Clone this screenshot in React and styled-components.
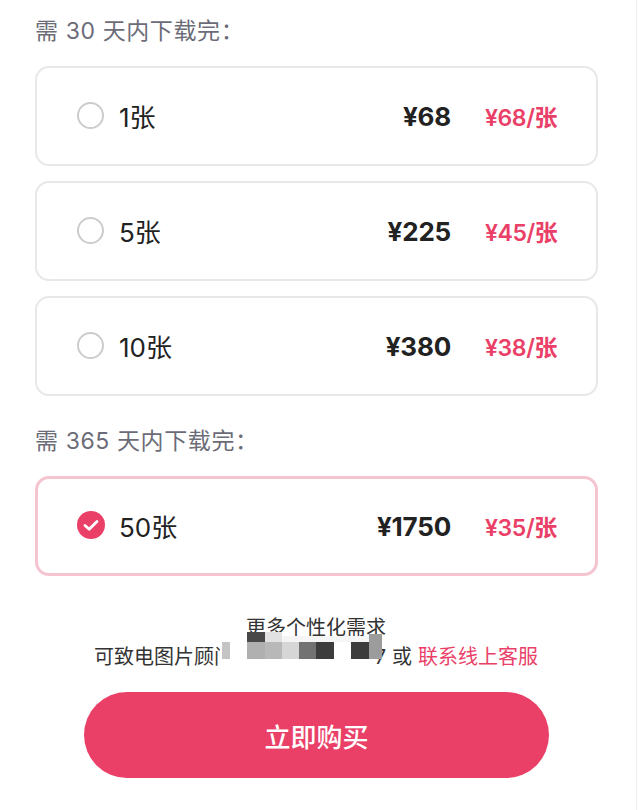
import styled, { createGlobalStyle } from 'styled-components';

const GlobalStyle = createGlobalStyle`
  body {
    margin: 0;
    background: #fff;
    font-family: "Inter", "Noto Sans CJK SC", sans-serif;
  }
`

const Page = styled.div`
  width: 640px;
  height: 810px;
  overflow: hidden;
`

const Panel = styled.div`
  width: 637px;
  height: 810px;
  box-sizing: border-box;
  padding: 15px 38px 0 35px;
  border-right: 1px solid #f3ecee;
`

const GroupTitle = styled.div`
  height: 32px;
  line-height: 32px;
  font-size: 23px;
  letter-spacing: 0.6px;
  color: #6c6c78;
  margin-bottom: ${props => props.$gap}px;
`

const PlanList = styled.div`
  display: flex;
  flex-direction: column;
  gap: 15px;
  margin-bottom: ${props => props.$gap}px;
`

const Plan = styled.div`
  height: 100px;
  box-sizing: border-box;
  display: flex;
  align-items: center;
  background: #fff;
  border: ${props => props.$active ? '3px solid #f4c4d0' : '2px solid #e8e8e8'};
  border-radius: 14px;
  padding: 0 ${props => props.$active ? '39px' : '40px'};
`

const Radio = styled.span`
  width: 27px;
  height: 27px;
  flex: none;
  box-sizing: border-box;
  border: 2px solid #cccccc;
  border-radius: 50%;
  margin-top: -2px;
`

const Checked = styled.svg`
  width: 28px;
  height: 28px;
  flex: none;
  margin: -2px -1px 0 0;
`

const Count = styled.span`
  margin: -2px 0 0 15px;
  font-size: 26px;
  color: #222;
`

const Price = styled.span`
  margin-left: auto;
  font-size: 26px;
  font-weight: 700;
  letter-spacing: -0.2px;
  color: #222;
`

const UnitPrice = styled.span`
  width: 71px;
  margin-left: 34px;
  font-size: 23px;
  font-weight: 600;
  letter-spacing: -0.4px;
  white-space: nowrap;
  color: #ea4068;
`

const Contact = styled.div`
  position: relative;
  width: 563px;
  text-align: center;
  font-size: 20px;
  color: #333;
`

const ContactTitle = styled.div`
  height: 27px;
  line-height: 27px;
  padding-right: 1px;
`

const ContactLine = styled.div`
  height: 30px;
  line-height: 30px;
  margin-left: 59px;
  display: flex;
  white-space: nowrap;
`

const Phone = styled.span`
  width: 158px;
  text-align: right;
  padding-right: 6px;
  box-sizing: border-box;
`

const ContactLink = styled.span`
  color: #ea4068;
  margin-left: 6px;
`

const Mosaic = styled.svg`
  position: absolute;
  left: 183px;
  top: 14px;
  width: 169px;
  height: 40px;
`

const BuyButton = styled.button`
  display: block;
  width: 465px;
  height: 86px;
  margin: 20px 0 0 49px;
  border: 0;
  border-radius: 43px;
  background: #ea4068;
  color: #fff;
  font-family: inherit;
  font-size: 26px;
  font-weight: 500;
`

const blocks = [
  [2, 13, 27, 25, '#ffffff'],
  [29, 3, 18, 10, '#484848'],
  [47, 3, 17, 10, '#e2e2e2'],
  [64, 7, 87, 6, '#f5f5f5'],
  [29, 13, 18, 17, '#b0b0b0'],
  [47, 13, 17, 17, '#b8b8b8'],
  [64, 13, 17, 17, '#d6d6d6'],
  [81, 13, 17, 17, '#727272'],
  [98, 13, 18, 17, '#3c3c3c'],
  [133, 13, 18, 17, '#3c3c3c'],
  [151, 5, 13, 25, '#9c9c9c'],
  [4, 13, 8, 17, '#c4c4c4'],
]

const PlanRow = ({ count, price, unit, active }) => (
  <Plan $active={active}>
    {active ? (
      <Checked viewBox="0 0 28 28">
        <circle cx="14" cy="14" r="14" fill="#ea4068" />
        <path d="M8 14.5l4.2 3.8L20 10.5" fill="none" stroke="#fff" strokeWidth="2.8" strokeLinecap="round" strokeLinejoin="round" />
      </Checked>
    ) : <Radio />}
    <Count>{count}张</Count>
    <Price>¥{price}</Price>
    <UnitPrice>¥{unit}/张</UnitPrice>
  </Plan>
)

export default function App() {
  return (
    <>
      <GlobalStyle />
      <Page>
        <Panel>
          <GroupTitle $gap={19}>需 30 天内下载完：</GroupTitle>
          <PlanList $gap={29}>
            <PlanRow count={1} price={68} unit={68} />
            <PlanRow count={5} price={225} unit={45} />
            <PlanRow count={10} price={380} unit={38} />
          </PlanList>
          <GroupTitle $gap={19}>需 365 天内下载完：</GroupTitle>
          <PlanList $gap={39}>
            <PlanRow count={50} price={1750} unit={35} active />
          </PlanList>
          <Contact>
            <ContactTitle>更多个性化需求</ContactTitle>
            <ContactLine>
              可致电图片顾问
              <Phone>7</Phone>
              或<ContactLink>联系线上客服</ContactLink>
            </ContactLine>
            <Mosaic viewBox="0 0 169 40">
              {blocks.map(([x, y, w, h, fill]) => (
                <rect key={`${x}-${y}`} x={x} y={y} width={w} height={h} fill={fill} />
              ))}
            </Mosaic>
          </Contact>
          <BuyButton>立即购买</BuyButton>
        </Panel>
      </Page>
    </>
  )
}
